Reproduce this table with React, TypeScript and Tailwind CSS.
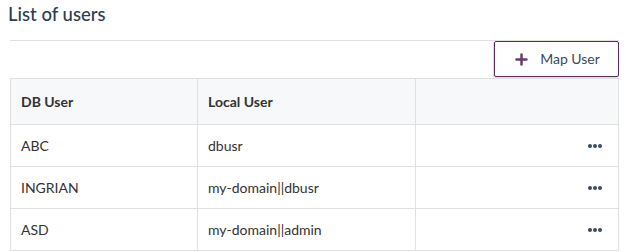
import { Plus } from 'lucide-react';

const rows = [
    { db: 'ABC', local: 'dbusr' },
    { db: 'INGRIAN', local: 'my-domain||dbusr' },
    { db: 'ASD', local: 'my-domain||admin' },
];

function Dots() {
    return (
        <svg width="14" height="4" viewBox="0 0 14 4" className="text-[#3b4a5e]">
            <circle cx="2" cy="2" r="2" fill="currentColor" />
            <circle cx="7" cy="2" r="2" fill="currentColor" />
            <circle cx="12" cy="2" r="2" fill="currentColor" />
        </svg>
    );
}

export default function App() {
    return (
        <div className="h-[252px] w-[626px] overflow-hidden bg-white font-['Lato',sans-serif] text-[#333]">
            {/* Title */}
            <h2 className="pl-2 pt-[2px] text-[18.5px] font-medium leading-6 text-[#2c3e50]">List of users</h2>

            <div className="ml-[10px] mr-[7px] mt-[14px] border-t border-[#e0e0e0]">
                {/* Toolbar */}
                <div className="flex justify-end">
                    <button className="flex h-[36px] w-[125px] items-center justify-center gap-[10px] rounded-[2px] border-[1.5px] border-[#5b2a5b] text-sm text-[#3c4a5c] shadow-[-1px_1px_1px_rgba(0,0,0,0.15)]">
                        <Plus size={17} strokeWidth={3.5} className="text-[#6b3a6b]" />
                        Map User
                    </button>
                </div>

                {/* Table */}
                <table className="mt-px w-full border-collapse text-left text-sm">
                    <thead>
                        <tr className="h-[46px] bg-[#f7f8fa]">
                            <th className="w-[187px] border border-[#e0e0e0] px-[10px] font-bold text-[#333]">DB User</th>
                            <th className="w-[218px] border border-[#e0e0e0] px-[10px] font-bold text-[#333]">Local User</th>
                            <th className="border border-[#e0e0e0]"></th>
                        </tr>
                    </thead>
                    <tbody>
                        {rows.map((r) => (
                            <tr key={r.db} className="h-[42px]">
                                <td className="border border-[#e0e0e0] px-[10px]">{r.db}</td>
                                <td className="border border-[#e0e0e0] px-[10px]">{r.local}</td>
                                <td className="border border-[#e0e0e0] pr-4">
                                    <div className="flex justify-end">
                                        <Dots />
                                    </div>
                                </td>
                            </tr>
                        ))}
                    </tbody>
                </table>
            </div>
        </div>
    );
}
